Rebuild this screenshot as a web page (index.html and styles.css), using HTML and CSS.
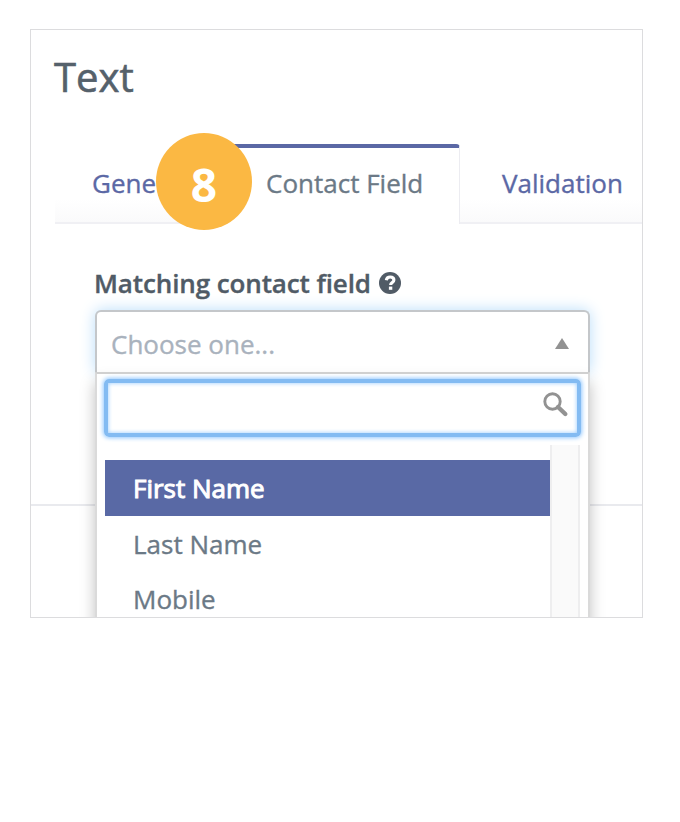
FILE: index.html
```html
<!DOCTYPE html>
<html lang="en">
<head>
<meta charset="utf-8">
<title>Text field settings</title>
<link rel="stylesheet" href="styles.css">
</head>
<body>
<main class="panel">
  <h1 class="title"><span>Text</span></h1>
  <nav class="tabs">
    <a class="tab tab-general"><span>General</span></a>
    <a class="tab tab-active"><span>Contact Field</span></a>
    <a class="tab tab-validation"><span>Validation</span></a>
    <div class="badge"><span>8</span></div>
  </nav>
  <section class="body">
    <div class="label">
      <span>Matching contact field</span>
      <svg class="help" viewBox="0 0 22 22"><circle cx="11" cy="11" r="11" fill="#505b66"/><path d="M7.300 8.200C7.700 5.900 9.200 5 11.200 5c2.100 0 3.700 1.200 3.700 3.100 0 2.400-3.300 2.500-3.300 5" fill="none" stroke="#fff" stroke-width="3.100"/><rect x="9.900" y="14.600" width="3.400" height="3.200" fill="#fff"/></svg>
    </div>
    <div class="select">
      <span>Choose one...</span>
      <svg class="arrow" viewBox="0 0 14 11"><path d="M7 0L14 11H0Z" fill="#929292"/></svg>
    </div>
    <div class="menu">
      <div class="search">
        <svg class="lens" viewBox="0 0 26 26"><circle cx="9.500" cy="9.500" r="7.700" fill="none" stroke="#929292" stroke-width="2.900"/><path d="M15 15L22.300 22" stroke="#929292" stroke-width="4.400" stroke-linecap="round"/></svg>
      </div>
      <div class="results">
        <ul class="list">
          <li class="item selected"><span>First Name</span></li>
          <li class="item last-name"><span>Last Name</span></li>
          <li class="item mobile"><span>Mobile</span></li>
        </ul>
        <div class="track"></div>
      </div>
    </div>
  </section>
  <div class="footer"></div>
</main>
</body>
</html>
```
FILE: styles.css
```css
* { box-sizing: border-box; }
body {
  margin: 0;
  padding: 29px 0 0 30px;
  background: #fff;
  font-family: "Open Sans", sans-serif;
  font-size: 26px;
  color: #6b7986;
  -webkit-text-stroke: .35px currentColor;
}
.panel {
  width: 613px;
  height: 589px;
  border: 1px solid #dcdcde;
  overflow: hidden;
  display: flex;
  flex-direction: column;
}
.title {
  margin: 0;
  padding: 19px 0 0 23px;
  height: 114px;
  font-size: 40px;
  line-height: 56px;
  font-weight: 400;
  color: #55616b;
  -webkit-text-stroke-width: .6px;
}
.tabs {
  position: relative;
  display: flex;
  height: 80px;
  margin-left: 24px;
  flex: none;
  line-height: 36px;
  white-space: nowrap;
}
.tab {
  padding-top: 21px;
  border-bottom: 2px solid #f0f0f4;
  background: linear-gradient(#fff 70%, #fafafb);
  color: #5b68a5;
}
.tab-general { width: 173px; padding-left: 37px; }
.tab-active {
  width: 232px;
  padding: 17px 0 0 38px;
  border-top: 4px solid #5b68a5;
  border-right: 1px solid #ececf1;
  border-bottom: 0;
  border-top-right-radius: 4px;
  background: #fff;
  color: #6b7986;
}
.tab-validation { flex: 1; padding-left: 42px; }
.badge {
  position: absolute;
  left: 101px;
  top: -11px;
  width: 96px;
  height: 97px;
  border-radius: 50%;
  background: #fbb843;
  color: #fff;
  font-size: 46px;
  line-height: 102px;
  font-weight: 700;
  text-align: center;
  -webkit-text-stroke-width: 0;
}
.body {
  height: 280px;
  padding: 41px 0 0 64px;
  position: relative;
  z-index: 1;
  flex: none;
}
.label {
  display: flex;
  align-items: center;
  height: 36px;
  margin-left: -1px;
  color: #505b66;
  font-weight: 600;
  letter-spacing: -.11px;
  white-space: nowrap;
}
.help { width: 22px; height: 22px; margin-left: 8px; }
.select {
  display: flex;
  align-items: center;
  justify-content: space-between;
  width: 495px;
  height: 62px;
  margin-top: 9px;
  padding: 3px 19px 0 14px;
  border: 2px solid #c4c7ca;
  border-bottom: 0;
  border-radius: 6px 6px 0 0;
  background: #fff;
  box-shadow: 0 0 15px #b9ddfa;
  color: #a9b2bd;
}
.arrow { width: 14px; height: 11px; }
.menu {
  position: relative;
  width: 495px;
  height: 300px;
  padding: 5px 7px 0;
  border: 2px solid #dadada;
  border-top-color: #d0d0d0;
  background: #fff;
  box-shadow: 0 10px 14px rgba(0, 0, 0, .25);
}
.search {
  height: 58px;
  border: 4px solid #83bbf2;
  border-radius: 5px;
  box-shadow: 0 0 4px 1px #91c8ff, inset 0 0 4px #91c8ff;
  display: flex;
  justify-content: flex-end;
  padding: 9px 8px 0 0;
}
.lens { width: 26px; height: 26px; }
.results { display: flex; margin-top: 8px; height: 220px; }
.list { list-style: none; margin: 0; padding: 15px 0 0 1px; width: 446px; }
.item { height: 55px; padding-left: 28px; line-height: 56px; white-space: nowrap; }
.selected {
  height: 56px;
  background: #5969a5;
  color: #fff;
  -webkit-text-stroke-width: 1px;
}
.track {
  width: 30px;
  border: solid #eeeeef;
  border-width: 0 2px;
  background: #fafafa;
}
.footer { border-top: 2px solid #e9eaee; flex: 1; }
```
